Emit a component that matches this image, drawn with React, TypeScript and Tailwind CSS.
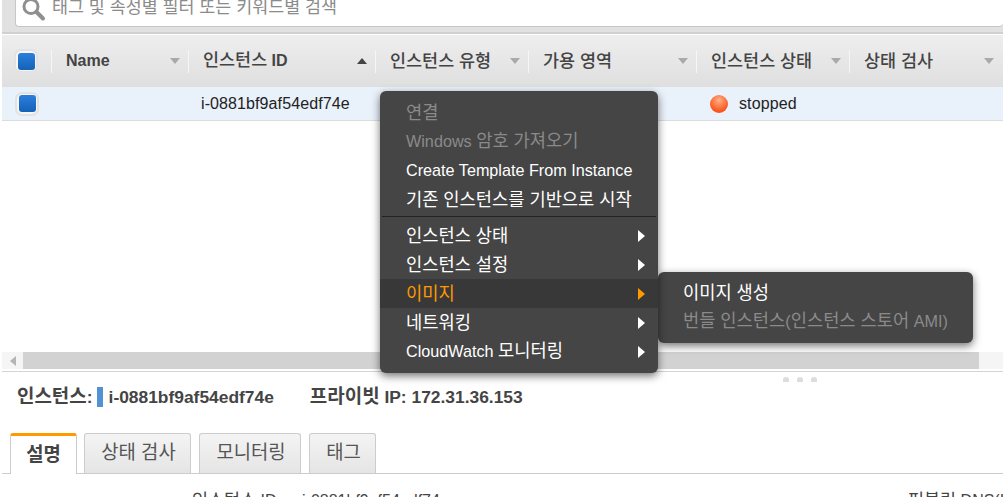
import React from "react";

const font = "font-['Liberation_Sans','Noto_Sans_CJK_KR',sans-serif]";

function T({ children, hangulClass = "" }: { children: string; hangulClass?: string }) {
  const parts = children.split(/([가-힣][가-힣 ]*[가-힣]|[가-힣])/).filter(Boolean);
  return (
    <>
      {parts.map((p, i) =>
        /[가-힣]/.test(p) ? (
          <span key={i} className={`text-[1.09em] leading-none ${hangulClass}`}>
            {p}
          </span>
        ) : (
          <span key={i}>{p}</span>
        )
      )}
    </>
  );
}

const hangulOnly = (s: string) => !/[A-Za-z]/.test(s);

function Check() {
  return (
    <div className="w-[24px] h-[24px] rounded-[7px] border-2 border-[#e2e2e2] bg-[#f6f6f6] flex items-center justify-center">
      <div className="w-[17px] h-[17px] rounded-[3px] bg-gradient-to-b from-[#2b7fdc] to-[#1462b8]" />
    </div>
  );
}

function Arrow({ up, dark }: { up?: boolean; dark?: boolean }) {
  return (
    <svg width="10" height="6" viewBox="0 0 10 6" className="shrink-0">
      <path d={up ? "M0 6 L10 6 L5 0 Z" : "M0 0 L10 0 L5 6 Z"} fill={dark ? "#444" : "#a9a9a9"} />
    </svg>
  );
}

const cols = [
  { w: "w-[137px]", label: "Name", bold: true },
  { w: "w-[187px]", label: "인스턴스 ID", bold: true, up: true },
  { w: "w-[153px]", label: "인스턴스 유형" },
  { w: "w-[168px]", label: "가용 영역" },
  { w: "w-[153px]", label: "인스턴스 상태" },
  { w: "w-[153px]", label: "상태 검사" },
];

function MenuItem({
  label,
  disabled,
  active,
  arrow,
  sub,
}: {
  label: string;
  disabled?: boolean;
  active?: boolean;
  arrow?: boolean;
  sub?: boolean;
}) {
  return (
    <div
      className={`h-[29px] flex items-center justify-between ${sub ? "pl-[25px]" : "pl-[26px]"} pr-[13px] text-[16.2px] whitespace-nowrap ${
        disabled ? "text-[#8a8a8a]" : active ? "text-[#ff9900] bg-[#383838]" : "text-white"
      }`}
    >
      <span className={hangulOnly(label) ? "block pt-[2px]" : "block"}>
        <T>{label}</T>
      </span>
      {arrow && (
        <svg width="7" height="12" viewBox="0 0 7 12">
          <path d="M0 0 L7 6 L0 12 Z" fill={active ? "#ff9900" : "#ffffff"} />
        </svg>
      )}
    </div>
  );
}

const tabClass =
  "h-[40px] border border-b-0 border-[#cccccc] rounded-t-[3px] bg-gradient-to-b from-[#f4f4f4] to-[#e5e5e5] flex items-center justify-center pl-[2px] text-[#555] shrink-0";

export default function App() {
  return (
    <div className={`${font} relative w-[1003px] h-[497px] overflow-hidden bg-white pl-[2px]`}>
      {/* filter bar */}
      <div className="h-[34px] bg-[#e1e1e1] border-b-2 border-[#d0d0d0] pl-[13px] overflow-hidden">
        <div className="h-[27px] bg-white rounded-b-[4px] border border-t-0 border-r-0 border-[#c6c6c6] flex items-start pl-[6px] gap-[6px] overflow-hidden">
          <svg width="24" height="22" viewBox="0 0 24 22" className="shrink-0">
            <circle cx="9" cy="6.5" r="7" fill="none" stroke="#8f8f8f" strokeWidth="3" />
            <path d="M14.5 12 L21 18.5" stroke="#8f8f8f" strokeWidth="4" strokeLinecap="round" />
          </svg>
          <span className="text-[17.4px] leading-[14px] text-[#8b8b8b]">태그 및 속성별 필터 또는 키워드별 검색</span>
        </div>
      </div>
      {/* table header */}
      <div className="mt-[1px] h-[52px] bg-gradient-to-b from-[#eeeeee] to-[#dfdfdf] flex items-center">
        <div className="w-[49px] pl-[12px] shrink-0">
          <Check />
        </div>
        {cols.map((c) => (
          <div key={c.label} className={`${c.w} shrink-0 h-[23px] border-l border-[#f6f6f6] flex items-center justify-between pl-[14px] pr-[8px]`}>
            <span
              className={`block text-[16px] text-[#444] whitespace-nowrap ${c.bold ? "font-bold" : "font-medium"} ${
                hangulOnly(c.label) ? "pt-[2px]" : ""
              }`}
            >
              <T hangulClass="font-medium">{c.label}</T>
            </span>
            <Arrow up={c.up} dark={c.up} />
          </div>
        ))}
      </div>
      {/* row */}
      <div className="h-[34px] bg-[#e9f1fb] border-b border-[#dcdcdc] flex items-center text-[16px] text-[#222]">
        <div className="w-[199px] pl-[13px] shrink-0">
          <Check />
        </div>
        <div className="w-[509px] shrink-0 tracking-[0.1px]">i-0881bf9af54edf74e</div>
        <div className="flex items-center gap-[11px]">
          <div className="w-[18px] h-[18px] rounded-full bg-[radial-gradient(circle_at_50%_30%,#ffb08a,#fb5a22_65%,#e64a19)]" />
          <span className="tracking-[0.1px]">stopped</span>
        </div>
      </div>
      {/* empty table area */}
      <div className="h-[231px]" />
      {/* horizontal scrollbar */}
      <div className="h-[20px] border-b border-[#d4d4d4] flex items-start">
        <div className="h-[17px] w-[21px] bg-[#f5f5f5] flex items-center justify-center">
          <svg width="6" height="10" viewBox="0 0 6 10">
            <path d="M6 0 L0 5 L6 10 Z" fill="#b5b5b5" />
          </svg>
        </div>
        <div className="h-[17px] w-[956px] bg-[#d2d2d2]" />
        <div className="h-[17px] flex-1 bg-[#f5f5f5]" />
      </div>
      {/* details header */}
      <div className="relative h-[50px] flex items-center pl-[15px] text-[17.4px] font-bold text-[#444] whitespace-nowrap">
        <span>
          <T>인스턴스:</T>
        </span>
        <span className="w-[6px] h-[20px] bg-[#5291d4] ml-[4px] mr-[6px]" />
        <span>i-0881bf9af54edf74e</span>
        <span className="ml-[36px]">
          <T>프라이빗 IP: 172.31.36.153</T>
        </span>
        <div className="absolute right-[186px] top-[5px] flex gap-[8px]">
          <span className="w-[6px] h-[5px] rounded-t-full bg-[#dddddd]" />
          <span className="w-[6px] h-[5px] rounded-t-full bg-[#dddddd]" />
          <span className="w-[6px] h-[5px] rounded-t-full bg-[#dddddd]" />
        </div>
      </div>
      {/* tabs */}
      <div className="h-[32px] border-b border-[#cccccc] flex items-end pl-[8px] text-[18.8px] mt-[20px]">
        <div className="w-[67px] h-[41px] -mb-[1px] border-t-[3px] border-t-[#ff9900] border-x border-x-[#cccccc] bg-white rounded-t-[3px] flex items-center justify-center font-bold text-[#444] shrink-0 self-end mt-[-9px]">
          설명
        </div>
        <div className={`${tabClass} w-[107px] ml-[7px]`}>상태 검사</div>
        <div className={`${tabClass} w-[102px] ml-[8px]`}>모니터링</div>
        <div className={`${tabClass} w-[67px] ml-[8px]`}>태그</div>
      </div>
      {/* details, cut by the window */}
      <div className="mt-[17px] flex text-[16px] text-[#444] leading-[20px] whitespace-nowrap pl-[190px]">
        <span className="w-[110px] shrink-0">
          <T>인스턴스 ID</T>
        </span>
        <span className="w-[606px] shrink-0">i-0881bf9af54edf74e</span>
        <span className="shrink-0">
          <T>퍼블릭 DNS(IPv4)</T>
        </span>
      </div>

      {/* context menu */}
      <div className="absolute left-[380px] top-[91px] w-[278px] h-[282px] bg-[#454545] rounded-[6px] py-[7px] shadow-[0_3px_8px_rgba(0,0,0,0.55)] z-10">
        <MenuItem label="연결" disabled />
        <MenuItem label="Windows 암호 가져오기" disabled />
        <MenuItem label="Create Template From Instance" />
        <MenuItem label="기존 인스턴스를 기반으로 시작" />
        <div className="h-[1px] mx-[2px] mt-[2px] mb-[4px] bg-[#222]" />
        <MenuItem label="인스턴스 상태" arrow />
        <MenuItem label="인스턴스 설정" arrow />
        <MenuItem label="이미지" active arrow />
        <MenuItem label="네트워킹" arrow />
        <MenuItem label="CloudWatch 모니터링" arrow />
      </div>
      {/* submenu */}
      <div className="absolute left-[658px] top-[272px] w-[315px] h-[71px] bg-[#454545] rounded-[6px] py-[6px] shadow-[0_3px_8px_rgba(0,0,0,0.55)]">
        <MenuItem label="이미지 생성" sub />
        <MenuItem label="번들 인스턴스(인스턴스 스토어 AMI)" disabled sub />
      </div>
    </div>
  );
}
